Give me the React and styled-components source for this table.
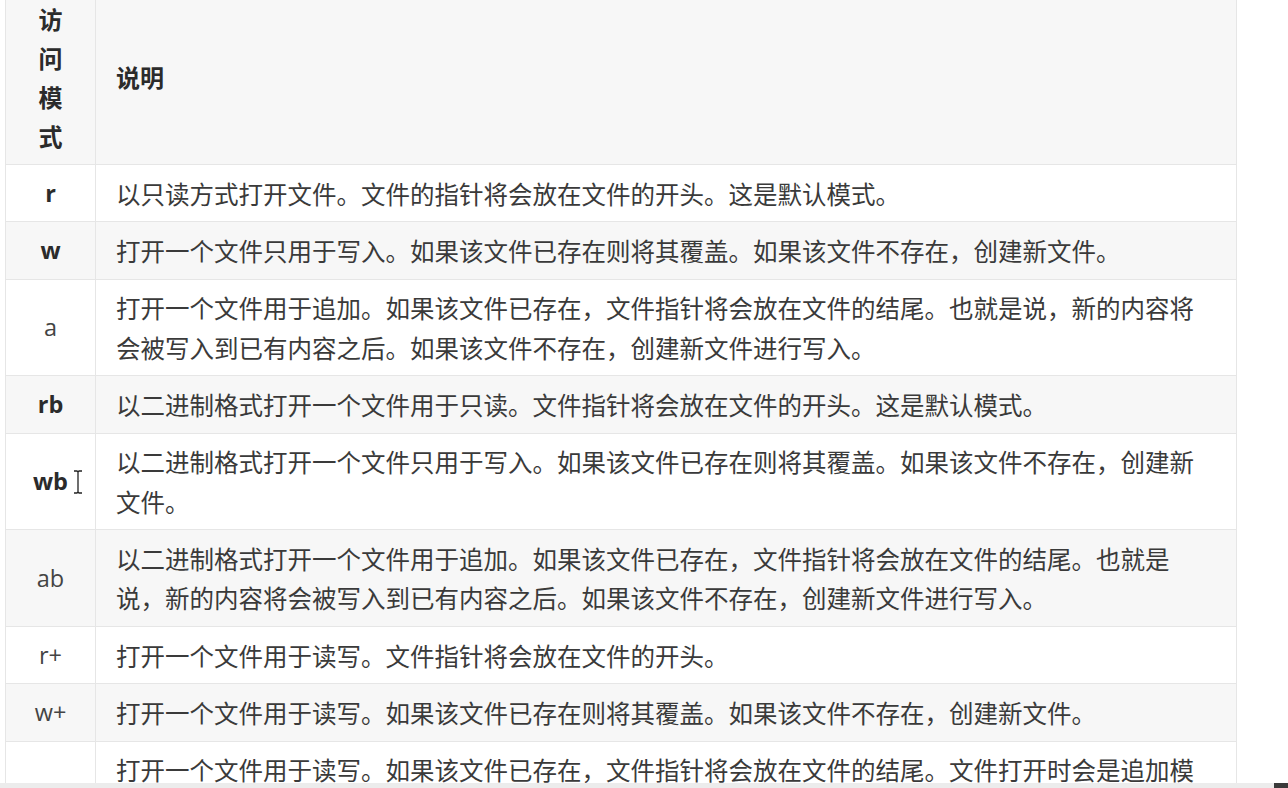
import React from 'react';
import styled, { createGlobalStyle } from 'styled-components';

const GlobalStyle = createGlobalStyle`
  html, body {
    margin: 0;
    padding: 0;
    background: #ffffff;
  }
`;

const Page = styled.div`
  display: flex;
  flex-direction: column;
  height: 100vh;
  overflow: hidden;
  font-family: "Open Sans", "Noto Sans CJK SC", sans-serif;
  color: #333333;
`;

const Viewport = styled.div`
  flex: 1;
  overflow: hidden;
  padding-left: 5px;
`;

const Table = styled.table`
  width: 1232px;
  margin-top: -11px;
  border-collapse: collapse;
  border: 1px solid #e6e6e6;
`;

const Row = styled.tr`
  background: ${p => (p.$shaded ? '#f7f7f7' : '#ffffff')};
  border-top: 1px solid #e6e6e6;
`;

const ModeCell = styled.td`
  width: 49px;
  padding: 8.6px 20px;
  text-align: center;
  vertical-align: middle;
  font-size: 23.5px;
  line-height: 39.2px;
  font-weight: ${p => (p.$bold ? 700 : 400)};
  color: ${p => (p.$bold ? '#2b2b2b' : '#444444')};
  border-right: 1px solid #e6e6e6;
  position: relative;
`;

const DescCell = styled.td`
  padding: 8.6px 20px;
  font-family: "Noto Sans CJK SC", sans-serif;
  font-size: 24.5px;
  line-height: 39.2px;
  vertical-align: middle;
  color: #3a3a3a;
`;

const HeadCell = styled.th`
  padding: 8.6px 20px;
  font-family: "Noto Sans CJK SC", sans-serif;
  font-size: 24px;
  line-height: 39.2px;
  font-weight: 700;
  color: #2b2b2b;
  text-align: ${p => (p.$center ? 'center' : 'left')};
  vertical-align: middle;
  border-right: ${p => (p.$center ? '1px solid #e6e6e6' : 'none')};
`;

const Stack = styled.span`
  display: inline-block;
  width: 1.1em;
`;

const Cursor = styled.svg`
  position: absolute;
  left: 67px;
  top: 36px;
`;

const BottomBar = styled.div`
  height: 5px;
  flex-shrink: 0;
  background: #ececec;
  display: flex;
  justify-content: flex-end;
`;

const Corner = styled.div`
  width: 14px;
  background: #3a3a3a;
`;

const rows = [
  { mode: 'r', bold: true, text: '以只读方式打开文件。文件的指针将会放在文件的开头。这是默认模式。' },
  { mode: 'w', bold: true, text: '打开一个文件只用于写入。如果该文件已存在则将其覆盖。如果该文件不存在，创建新文件。' },
  { mode: 'a', text: '打开一个文件用于追加。如果该文件已存在，文件指针将会放在文件的结尾。也就是说，新的内容将会被写入到已有内容之后。如果该文件不存在，创建新文件进行写入。' },
  { mode: 'rb', bold: true, text: '以二进制格式打开一个文件用于只读。文件指针将会放在文件的开头。这是默认模式。' },
  { mode: 'wb', bold: true, cursor: true, text: '以二进制格式打开一个文件只用于写入。如果该文件已存在则将其覆盖。如果该文件不存在，创建新文件。' },
  { mode: 'ab', text: '以二进制格式打开一个文件用于追加。如果该文件已存在，文件指针将会放在文件的结尾。也就是说，新的内容将会被写入到已有内容之后。如果该文件不存在，创建新文件进行写入。' },
  { mode: 'r+', text: '打开一个文件用于读写。文件指针将会放在文件的开头。' },
  { mode: 'w+', text: '打开一个文件用于读写。如果该文件已存在则将其覆盖。如果该文件不存在，创建新文件。' },
  { mode: 'a+', text: '打开一个文件用于读写。如果该文件已存在，文件指针将会放在文件的结尾。文件打开时会是追加模式。如果该文件不存在，创建新文件用于读写。' },
];

const App = () => {
  return (
    <Page>
      <GlobalStyle />
      <Viewport>
        <Table>
          <thead>
            <Row $shaded>
              <HeadCell $center>
                <Stack>访问模式</Stack>
              </HeadCell>
              <HeadCell>说明</HeadCell>
            </Row>
          </thead>
          <tbody>
            {rows.map((row, i) => (
              <Row key={row.mode} $shaded={i % 2 === 1}>
                <ModeCell $bold={row.bold}>
                  {row.mode}
                  {row.cursor && (
                    <Cursor width="10" height="24" viewBox="0 0 10 24">
                      <path d="M1 1h3l1 1 1-1h3M5 2v20M1 23h3l1-1 1 1h3" fill="none" stroke="#222" strokeWidth="1.3" />
                    </Cursor>
                  )}
                </ModeCell>
                <DescCell>{row.text}</DescCell>
              </Row>
            ))}
          </tbody>
        </Table>
      </Viewport>
      <BottomBar>
        <Corner />
      </BottomBar>
    </Page>
  );
};

export default App;
